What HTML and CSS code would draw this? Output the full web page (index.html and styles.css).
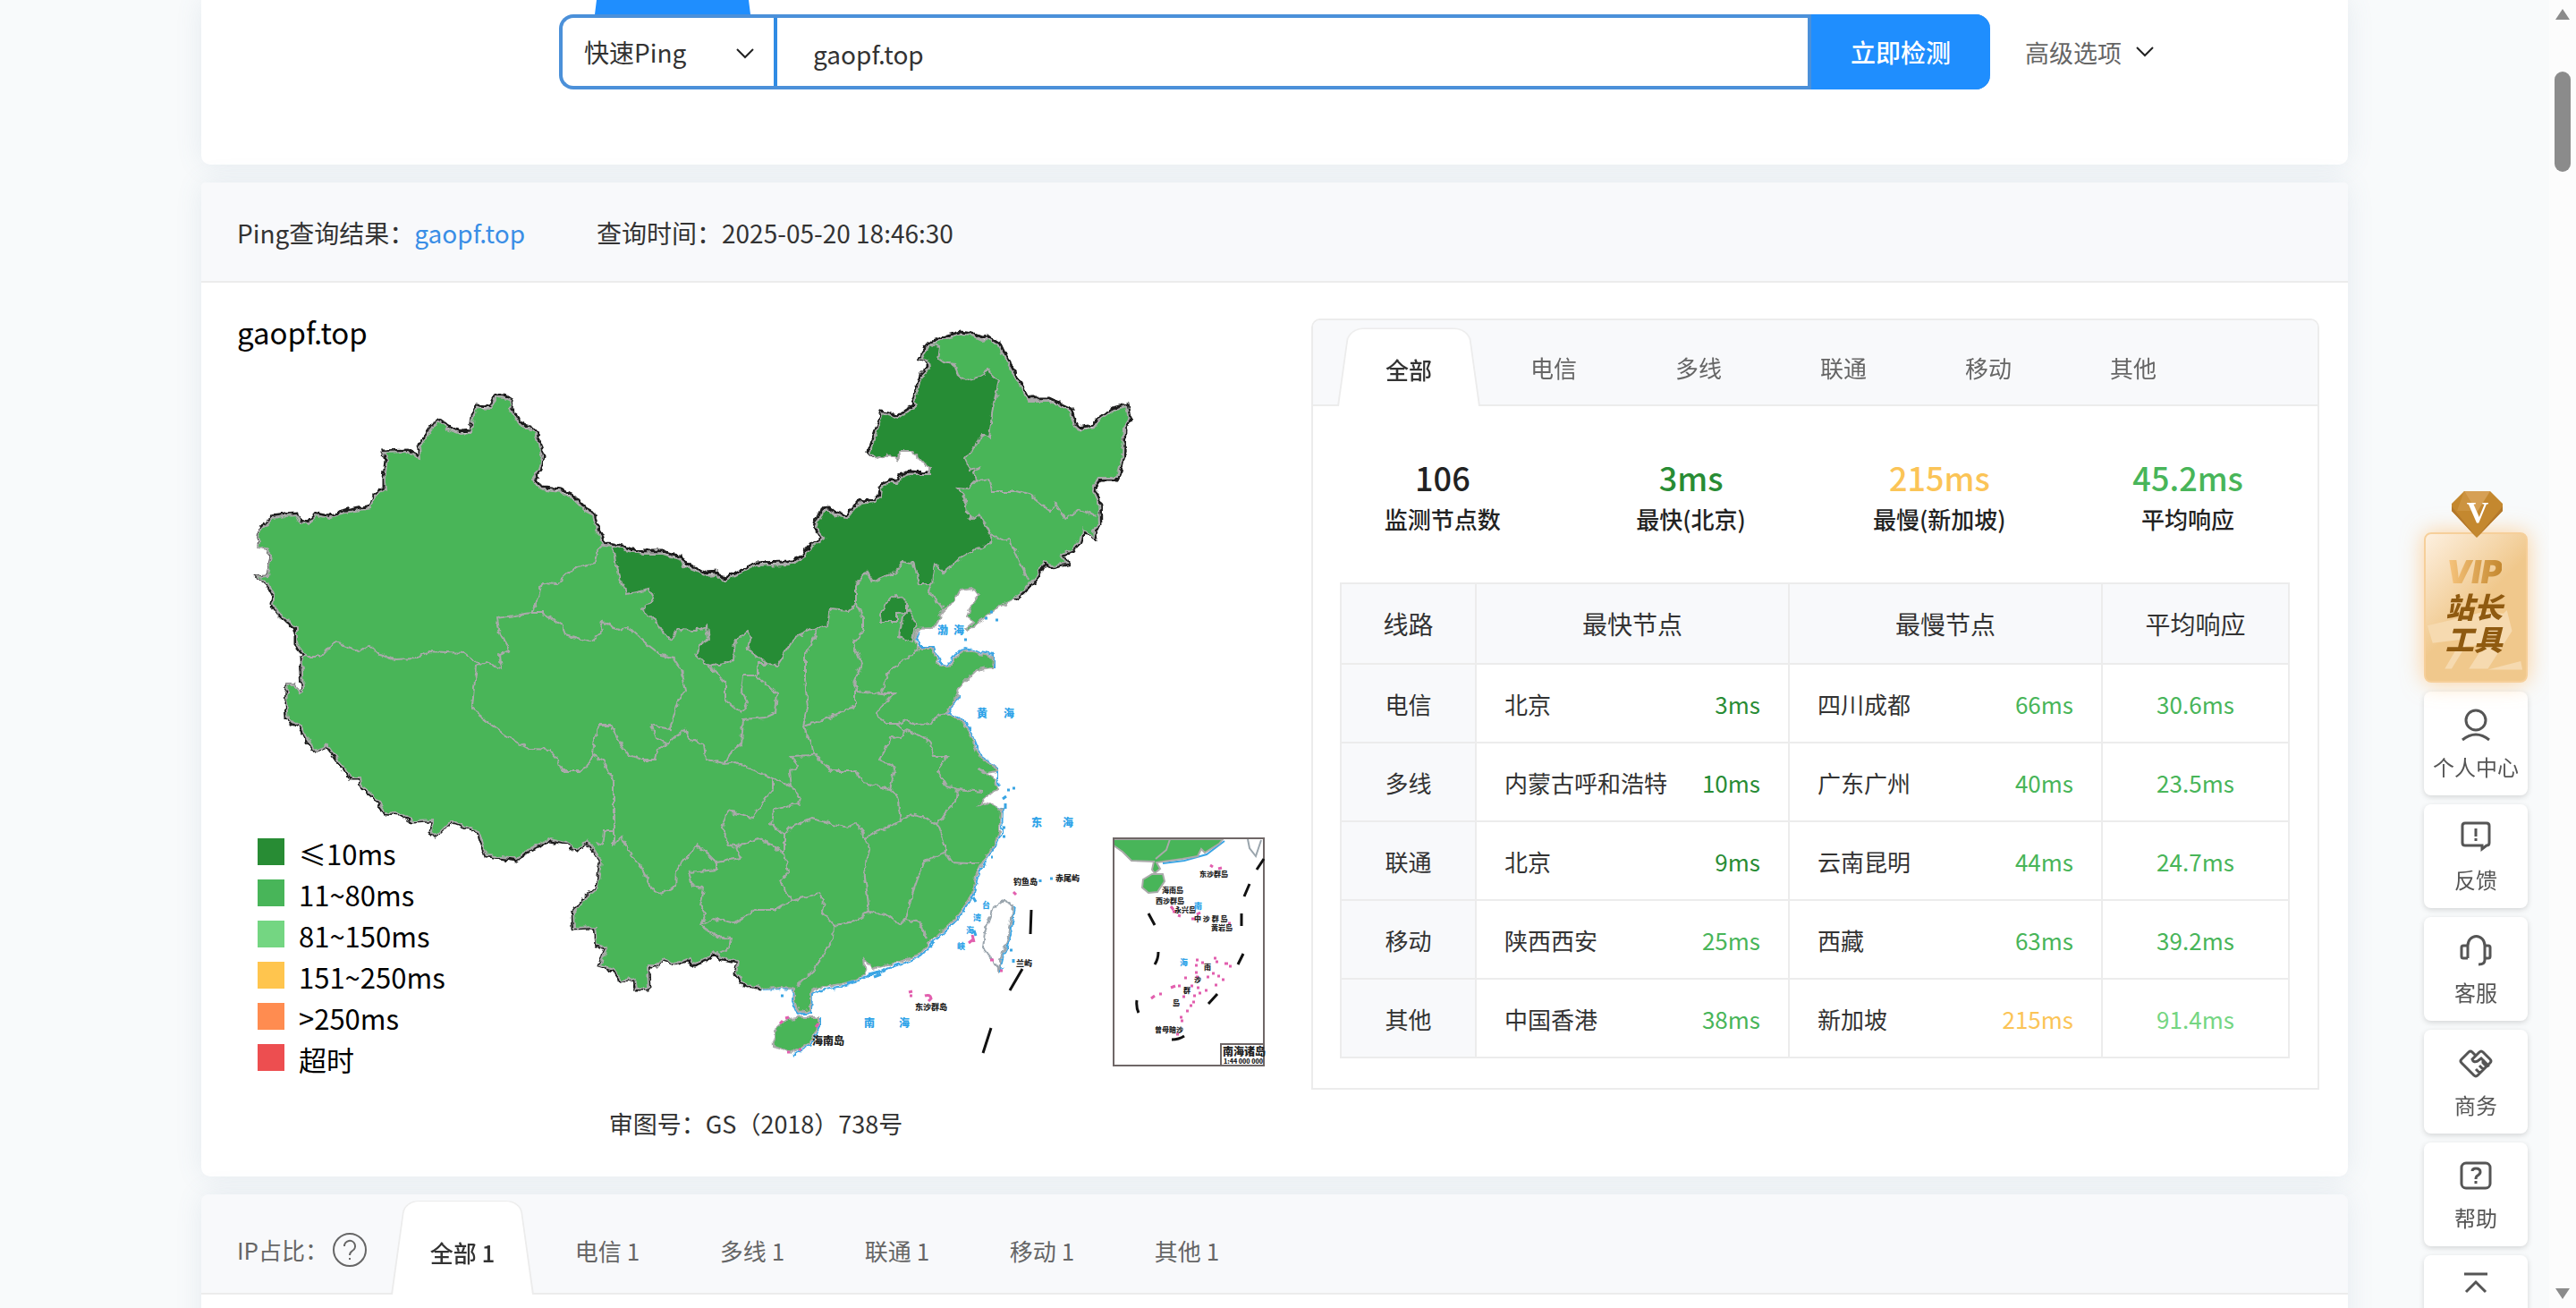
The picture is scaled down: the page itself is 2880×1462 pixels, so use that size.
FILE: index.html
```
<!DOCTYPE html>
<html lang="zh-CN">
<head>
    <meta charset="UTF-8">
    <meta name="viewport" content="width=device-width, initial-scale=1">
    <title>Ping检测</title>
    <link rel="stylesheet" href="styles.css">
</head>
<body>
    <div class="page">
        <section class="card search-card">
            <div class="search-tab"></div>
            <form class="search-row">
                <div class="search-box">
                    <div class="select-wrap">
                        <select class="mode" aria-label="检测方式">
                            <option>快速Ping</option>
                        </select>
                        <svg class="chevron" viewBox="0 0 20 12"><path d="M1 1l9 9 9-9"/></svg>
                    </div>
                    <input class="host" type="text" value="gaopf.top" aria-label="域名">
                    <button class="submit" type="button">立即检测</button>
                </div>
                <a class="advanced" href="#">高级选项
                    <svg class="chevron" viewBox="0 0 20 12"><path d="M1 1l9 9 9-9"/></svg>
                </a>
            </form>
        </section>

        <section class="card">
            <header class="card-head">
                <span>Ping查询结果：<a href="#">gaopf.top</a></span>
                <span>查询时间：2025-05-20 18:46:30</span>
            </header>
            <div class="result">
                <div class="map-col">
                    <svg class="map" viewBox="265 356 1160 880">
                        <defs>
                            <filter id="rough" x="-2%" y="-2%" width="104%" height="104%">
                                <feTurbulence type="fractalNoise" baseFrequency="0.13" numOctaves="2" seed="4"/>
                                <feDisplacementMap in="SourceGraphic" scale="7" xChannelSelector="R" yChannelSelector="G"/>
                            </filter>
                        </defs>
                        <text class="map-title" x="265" y="385">gaopf.top</text>

                        <g class="country" filter="url(#rough)">
                            <!-- country border, slightly above the land -->
                            <path class="border" d="M289 609L291 587 298 585 305 575 319 573 333 572 337 580 345 582 354 572 369 575 379 571 392 568 415 563 419 551 430 545 430 533 432 512 429 502 457 501 463 504 469 508 469 496 490 466 501 474 516 480 527 479 529 463 534 451 548 452 554 440 566 440 574 445 573 455 583 471 589 474 594 475 602 484 606 498 609 508 606 523 599 533 602 539 610 543 629 545 640 550 656 566 665 571 671 594 677 605 687 606 700 610 719 614 742 614 762 620 767 628 790 638 803 637 806 642 811 644 846 627 883 626 896 621 906 608 920 599 911 587 919 567 928 566 933 570 947 574 961 558 978 557 984 552 985 542 994 535 1004 534 1007 530 1017 525 1040 526M978 509L972 503 975 493 987 458 1004 463 1014 456 1023 451 1021 446 1030 417 1038 409 1038 402 1029 399 1039 381 1060 373 1075 369 1088 371 1098 375 1107 374 1119 382 1127 399 1138 419 1147 434 1152 443 1174 443 1198 454 1202 467 1206 476 1224 473 1229 466 1246 454 1261 450 1265 467 1259 477 1258 507 1252 534 1231 534 1224 543 1231 558 1232 585 1225 592 1226 601 1213 593 1210 603 1201 615 1189 618 1195 629 1176 633 1169 629 1163 640 1157 649 1136 669"/>
                            <path class="border" d="M289 609L298 612 304 618 300 642 287 643 300 652 306 663 304 673 312 684 331 701 331 718 342 732 337 733 339 768 334 773 331 763 322 763 320 783 321 802 336 811 352 838 366 832 381 853 393 868 403 868 404 878 418 889 431 907 447 908 462 917 484 916 482 928 488 934 505 917 535 928 544 955 578 960 593 949 616 938 633 941 647 950 657 938 663 947 672 960 668 990 653 1003 641 1018 642 1036 665 1035 667 1054 678 1058 670 1078 686 1083 695 1096 710 1093 712 1104 727 1104 726 1078 736 1078 742 1071 757 1076 769 1072 777 1077 790 1072 800 1064 807 1071 825 1074 823 1086 833 1100 852 1104"/>
                            <path class="sea" d="M853 1104L873 1103 888 1104 887 1118 893 1132 908 1130 909 1109 916 1106 956 1097 971 1089 1001 1078 1030 1067 1047 1049 1073 1024 1090 998 1094 978 1104 958 1114 943 1121 930 1122 903 1106 897M1118 878L1116 868 1116 856 1097 842 1089 822 1082 806 1061 794 1073 775M1112 744L1112 730 1096 727 1080 723 1071 727 1061 741 1051 738 1045 721 1031 721 1025 711 1028 703"/>
                            <path class="land" d="M289 611L291 589 298 587 305 577 319 575 333 574 337 582 345 584 354 574 369 577 379 573 392 570 415 566 419 553 432 546 431 533 434 512 430 504 457 503 463 506 471 511 470 498 490 468 501 477 516 483 528 482 530 463 535 454 549 455 555 442 566 443 573 446 571 455 581 472 587 476 592 476 600 484 604 498 607 508 604 523 597 533 600 541 610 546 629 548 639 553 654 568 664 573 669 595 676 607 687 608 700 613 719 617 742 617 761 623 765 631 790 641 803 640 805 645 811 647 846 630 883 629 897 623 908 609 922 599 913 587 921 569 928 569 933 573 948 577 962 561 979 559 986 553 987 543 995 537 1004 537 1007 532 1017 528 1040 528 1040 522 1029 510 1020 503 1008 503 1003 512 995 507 980 511 974 503 977 493 988 460 1004 466 1015 458 1025 453 1023 446 1032 418 1041 409 1040 402 1031 399 1040 383 1060 376 1075 372 1087 373 1098 378 1107 377 1117 383 1125 400 1136 420 1145 435 1150 446 1174 446 1196 456 1200 468 1206 479 1225 476 1230 468 1247 456 1260 452 1263 467 1257 477 1256 507 1250 532 1230 532 1222 543 1229 558 1230 585 1223 591 1224 599 1212 590 1208 603 1200 613 1187 617 1193 628 1176 631 1168 626 1162 638 1156 647 1135 667 1131 670 1118 676 1096 693 1082 703 1080 701 1090 693 1083 688 1086 677 1095 663 1089 655 1075 657 1069 668 1054 682 1049 693 1044 700 1026 701 1023 712 1029 723 1044 723 1049 740 1062 743 1073 728 1080 725 1096 729 1111 732 1110 744 1093 747 1082 757 1073 767 1071 775 1059 795 1080 807 1087 823 1095 843 1114 855 1116 860 1104 862 1094 858 1114 870 1116 880 1102 890 1095 898 1106 895 1120 903 1118 930 1112 943 1102 957 1092 977 1088 997 1071 1023 1045 1047 1029 1065 1000 1075 976 1082 967 1070 969 1087 955 1095 914 1103 907 1108 907 1128 894 1130 889 1117 889 1103 873 1102 853 1103 834 1098 824 1085 826 1073 807 1069 800 1062 790 1070 777 1075 769 1070 757 1075 742 1070 736 1077 725 1077 726 1103 713 1103 711 1092 696 1095 687 1082 671 1077 679 1058 668 1053 666 1034 643 1035 642 1018 654 1003 669 990 673 960 664 947 657 936 647 949 633 940 616 936 593 947 578 958 545 954 536 927 505 916 488 933 483 927 485 915 463 916 448 907 432 906 419 888 405 877 404 867 394 867 382 852 367 831 353 837 337 810 323 802 321 783 323 763 331 763 335 772 340 768 338 733 344 732 333 718 333 700 313 683 306 673 308 663 301 652 288 643 300 642 304 618 298 612Z"/>
                            <!-- Hainan -->
                            <path class="sea" d="M918 1136L918 1146 909 1164 888 1177"/>
                            <path class="land" d="M916 1135L916 1145 907 1163 886 1175 867 1168 866 1150 882 1137 900 1135Z"/>
                            <!-- Inner Mongolia, Beijing, Tianjin -->
                            <path class="land fast" d="M687 608L700 613 719 617 742 617 761 623 765 631 790 641 803 640 805 645 811 647 846 630 883 629 897 623 908 609 922 599 913 587 921 569 928 569 933 573 948 577 962 561 979 559 986 553 987 543 995 537 1004 537 1007 532 1017 528 1040 528 1040 522 1029 510 1020 503 1008 503 1003 512 995 507 980 511 974 503 977 493 988 460 1004 466 1015 458 1025 453 1023 446 1032 418 1041 409 1040 402 1031 399 1040 383 1051 385 1049 398 1056 403 1068 405 1072 418 1080 423 1101 418 1104 411 1118 423 1111 453 1107 487 1100 483 1080 510 1086 523 1096 520 1090 527 1093 535 1084 544 1072 543 1080 557 1082 573 1089 579 1096 573 1104 587 1110 596 1108 605 1091 613 1073 623 1056 638 1046 627 1043 650 1029 650 1022 627 1011 625 1004 637 977 648 970 637 958 652 958 673 950 681 929 679 926 697 908 702 890 710 877 730 870 741 859 740 837 725 841 710 837 703 823 715 821 735 810 740 793 743 779 730 782 720 793 713 791 698 779 703 758 702 752 712 741 705 734 692 718 680 732 667 727 657 702 662 693 642Z"/>
                            <path class="land fast" d="M1002 662L1015 672 1015 682 1004 683 1004 693 986 693 985 685 991 673Z"/>
                            <path class="land fast" d="M1017 680L1025 695 1020 715 1006 710 1010 687Z"/>
                            <!-- province lines -->
                            <path class="line" d="M676 607L668 615 666 627 643 633 623 651 607 650 601 673 595 683 557 689 560 707 570 725 560 730 562 745 545 738 534 743 531 767 529 787 536 797 566 820 593 835 616 836 625 847 629 860 648 860 660 852 664 840"/>
                            <path class="line" d="M344 732L360 732 376 715 402 726 413 719 425 730 442 735 467 734 480 726 520 728 539 742"/>
                            <path class="line" d="M595 683L607 683 629 697 633 707 660 715 671 707 675 693 692 702 704 699 723 717 740 730 754 733 763 747 768 770 759 783 750 812 729 808 735 823 746 830 735 837 733 847 719 847 704 842 691 823 683 808 671 808 666 823 664 842 675 848 687 872 687 927 677 927 675 943 666 940"/>
                            <path class="line" d="M687 927L687 943 696 933 706 953 719 970 729 990 738 997 756 990 757 970 775 950 779 943 790 950 802 962 802 970 771 973 775 987 788 992 784 1010 790 1020 784 1032 802 1045 819 1047 817 1058 805 1063"/>
                            <path class="line" d="M784 1032L800 1025 822 1030 845 1015 867 1015 886 1004 916 997 922 1005 920 1017 934 1032 933 1047 910 1083 892 1100"/>
                            <path class="line" d="M886 1004L873 982 882 973 878 953 865 943 849 935 824 945 829 957 802 962"/>
                            <path class="line" d="M878 953L878 930 884 923 908 913 949 923 959 918 968 935 973 947 967 970 973 1017 957 1028 934 1032M973 1017L992 1020 1008 1032 1014 1025 1029 1028 1037 1047M968 935L976 930 1008 916"/>
                            <path class="line" d="M1014 1025L1020 1000 1033 963 1057 950 1065 962 1082 963 1096 963M1057 950L1057 940 1049 920 1037 913 1020 908 1008 916 1004 887 996 880 1002 855 984 847 992 833 996 822 1010 823 1012 813 1002 807"/>
                            <path class="line" d="M1012 813L1037 823 1045 843 1061 843 1049 860 1059 877 1071 880 1069 895 1061 903 1049 920M1071 880L1100 883"/>
                            <path class="line" d="M996 880L967 873 959 860 931 860 912 842 884 843 894 855 884 860 886 877 896 890 894 897 865 903 863 920 878 930M811 852L824 850 886 877M865 867L865 880 853 897 841 912 814 905 808 923 814 940 824 945"/>
                            <path class="line" d="M746 830L757 820 767 813 773 825 788 830 790 847 811 852 819 837 830 830 832 802 857 800 868 795 870 773 846 753 832 753 830 770 837 783 830 795 812 780 812 762 796 743M848 753L848 740 859 740"/>
                            <path class="line" d="M915 702L901 730 901 757 904 790 899 810 910 833 912 842M899 810L928 800 957 787 957 768"/>
                            <path class="line" d="M958 673L966 690 966 703 955 717 964 740 955 763 959 770 988 773 986 770 995 747 1020 730 1029 723M988 773L1000 773 979 797 993 807 1006 807 1015 802 1024 808 1042 807 1049 797 1059 795"/>
                            <path class="line" d="M1043 650L1040 660 1055 678M1110 596L1125 603 1129 600 1140 623 1150 647M1093 535L1107 533 1111 547 1136 547 1154 552 1176 570 1180 560 1193 579 1207 567 1227 575"/>
                            <!-- Taiwan -->
                            <path class="sea" d="M1136 1010L1131 1043 1122 1070 1119 1083"/>
                            <path class="island" d="M1124 1005L1134 1010 1129 1043 1120 1070 1118 1082 1112 1073 1100 1058 1102 1040 1112 1013Z"/>
                        </g>

                        <g class="dots-blue">
                            <path d="M1101 691h3M1107 684h3M1113 693h3M1078 715h3M1126 883h3M1132 881h3M1121 893l4 -3M1124 898v6M1121 925h3M1121 935h3M1109 950h2M1108 958h2M1088 1003l3 5M1089 1040l2 6M1129 1062h3M1133 1076v-4M1163 986v-3M1174 982h3M971 1089l12 -3M977 1092l8 -3M947 1099l8 -2M873 1113h3"/>
                        </g>
                        <g class="dots-pink">
                            <path d="M1133 997l3 3M1083 1054l5 -4M1087 1045l2 8M1107 1073h4M1118 1085h3M1016 1109l4 -1M1017 1113h3M1034 1113q6 -2 7 3l-3 3M872 1144l3 -3M878 1138l4 -1M880 1176h3M893 1173h3M912 1148l3 -4"/>
                        </g>
                        <path class="dash" d="M1153 1017L1152 1044M1143 1083L1129 1107M1108 1149L1099 1177"/>

                        <g class="label blue">
                            <text x="1048" y="709">渤</text><text x="1066" y="709">海</text>
                            <text x="1092" y="802">黄</text><text x="1122" y="802">海</text>
                            <text x="1153" y="924">东</text><text x="1188" y="924">海</text>
                            <text x="966" y="1148">南</text><text x="1005" y="1148">海</text>
                            <text class="small" x="1098" y="1015">台</text><text class="small" x="1088" y="1029">湾</text>
                            <text class="small" x="1080" y="1043">海</text><text class="small" x="1070" y="1061">峡</text>
                        </g>
                        <g class="label">
                            <text class="small" x="1133" y="989">钓鱼岛</text>
                            <text class="small" x="1180" y="985">赤尾屿</text>
                            <text class="small" x="1136" y="1080">兰屿</text>
                            <text class="small" x="1023" y="1129">东沙群岛</text>
                            <text x="908" y="1168">海南岛</text>
                        </g>

                        <!-- South China Sea inset -->
                        <path class="sea" d="M1369 940L1349 955 1324 962 1300 965"/>
                        <path class="land" d="M1245 938H1367L1363 943 1347 953 1343 949 1339 957 1322 960 1300 963 1293 964 1297 971 1291 976 1288 972 1290 963 1265 962 1255 952 1245 945Z"/>
                        <path class="line" d="M1308 938L1304 950 1292 960"/>
                        <path class="land" d="M1300 977L1302 985 1294 997 1284 998 1277 992 1278 983 1288 977Z"/>
                        <path class="island" d="M1395 938L1397 948 1404 957 1410 939"/>
                        <rect class="inset" x="1245" y="937" width="168" height="254"/>
                        <rect class="inset" x="1365" y="1167" width="48" height="24"/>
                        <path class="dash" d="M1413 960L1405 972M1397 988L1391 1002M1388 1021V1035M1390 1066L1384 1078M1361 1111L1351 1122M1324 1158Q1318 1162 1310 1162M1271 1118Q1270 1126 1273 1132M1295 1064Q1295 1072 1291 1078M1284 1021L1291 1034"/>
                        <g class="dots-pink">
                            <path d="M1353 967l3 2M1362 971l4 -1M1309 1013l3 4M1311 1019h4M1317 1023l3 1M1332 1027h4M1338 1022l4 -2M1373 1032h3M1337 1073h3M1336 1079h3M1343 1076h3M1357 1071h3M1359 1075h3M1369 1077h4M1374 1080h3M1336 1087h3M1337 1092h3M1349 1092h3M1355 1088h3M1361 1091h3M1366 1095h3M1324 1093h3M1309 1104l5 -2M1317 1102h3M1331 1102h3M1338 1104h3M1347 1107h3M1340 1110h3M1334 1113h3M1296 1111h3M1287 1116l4 -3M1322 1114h3M1333 1120h3M1330 1124h3M1326 1130h3M1319 1137h3M1320 1141h3M1315 1156h3M1358 1101h3"/>
                        </g>
                        <g class="label tiny">
                            <text x="1341" y="980">东沙群岛</text>
                            <text x="1299" y="998">海南岛</text>
                            <text x="1292" y="1010">西沙群岛</text>
                            <text x="1313" y="1020">永兴岛</text>
                            <text x="1335" y="1030">中 沙 群 岛</text>
                            <text x="1354" y="1040">黄岩岛</text>
                            <text x="1346" y="1084">南</text><text x="1335" y="1098">沙</text>
                            <text x="1323" y="1110">群</text><text x="1311" y="1124">岛</text>
                            <text x="1291" y="1154">曾母暗沙</text>
                            <text class="scale" x="1368" y="1189">1:44 000 000</text>
                        </g>
                        <g class="label"><text x="1367" y="1180">南海诸岛</text></g>
                        <g class="label blue"><text class="small" x="1335" y="1016">南</text><text class="small" x="1319" y="1079">海</text></g>

                        <g class="legend">
                            <rect x="288" y="937" width="30" height="30" fill="#288c34"/><text x="334" y="967">≤10ms</text>
                            <rect x="288" y="983" width="30" height="30" fill="#48b559"/><text x="334" y="1013">11~80ms</text>
                            <rect x="288" y="1029" width="30" height="30" fill="#74d682"/><text x="334" y="1059">81~150ms</text>
                            <rect x="288" y="1075" width="30" height="30" fill="#ffc54e"/><text x="334" y="1105">151~250ms</text>
                            <rect x="288" y="1121" width="30" height="30" fill="#ff8c50"/><text x="334" y="1151">&gt;250ms</text>
                            <rect x="288" y="1167" width="30" height="30" fill="#ed4e50"/><text x="334" y="1197">超时</text>
                        </g>
                    </svg>
                    <p class="map-note">审图号：GS（2018）738号</p>
                </div>

                <div class="panel">
                    <div class="tabs">
                        <button class="tab active" type="button">全部</button>
                        <button class="tab" type="button">电信</button>
                        <button class="tab" type="button">多线</button>
                        <button class="tab" type="button">联通</button>
                        <button class="tab" type="button">移动</button>
                        <button class="tab" type="button">其他</button>
                    </div>
                    <div class="stats">
                        <div class="stat"><strong>106</strong><span>监测节点数</span></div>
                        <div class="stat"><strong class="t-fast">3ms</strong><span>最快(北京)</span></div>
                        <div class="stat"><strong class="t-slow">215ms</strong><span>最慢(新加坡)</span></div>
                        <div class="stat"><strong class="t-good">45.2ms</strong><span>平均响应</span></div>
                    </div>
                    <table class="lines">
                        <colgroup>
                            <col class="c-line"><col class="c-node"><col class="c-node"><col class="c-avg">
                        </colgroup>
                        <thead>
                            <tr><th>线路</th><th>最快节点</th><th>最慢节点</th><th>平均响应</th></tr>
                        </thead>
                        <tbody>
                            <tr>
                                <th>电信</th>
                                <td><div class="node">北京<span class="t-fast">3ms</span></div></td>
                                <td><div class="node">四川成都<span class="t-good">66ms</span></div></td>
                                <td class="t-good">30.6ms</td>
                            </tr>
                            <tr>
                                <th>多线</th>
                                <td><div class="node">内蒙古呼和浩特<span class="t-fast">10ms</span></div></td>
                                <td><div class="node">广东广州<span class="t-good">40ms</span></div></td>
                                <td class="t-good">23.5ms</td>
                            </tr>
                            <tr>
                                <th>联通</th>
                                <td><div class="node">北京<span class="t-fast">9ms</span></div></td>
                                <td><div class="node">云南昆明<span class="t-good">44ms</span></div></td>
                                <td class="t-good">24.7ms</td>
                            </tr>
                            <tr>
                                <th>移动</th>
                                <td><div class="node">陕西西安<span class="t-good">25ms</span></div></td>
                                <td><div class="node">西藏<span class="t-good">63ms</span></div></td>
                                <td class="t-good">39.2ms</td>
                            </tr>
                            <tr>
                                <th>其他</th>
                                <td><div class="node">中国香港<span class="t-good">38ms</span></div></td>
                                <td><div class="node">新加坡<span class="t-slow">215ms</span></div></td>
                                <td class="t-mid">91.4ms</td>
                            </tr>
                        </tbody>
                    </table>
                </div>
            </div>
        </section>

        <section class="card">
            <div class="tabs ip-tabs">
                <span class="ip-label">IP占比：</span>
                <svg class="ip-help" viewBox="0 0 38 38"><circle cx="19" cy="19" r="18"/><path d="M13 15a6 6 0 1 1 9 5q-3 2-3 5"/><path d="M19 28v2"/></svg>
                <button class="tab active" type="button">全部 1</button>
                <button class="tab" type="button">电信 1</button>
                <button class="tab" type="button">多线 1</button>
                <button class="tab" type="button">联通 1</button>
                <button class="tab" type="button">移动 1</button>
                <button class="tab" type="button">其他 1</button>
            </div>
            <div class="ip-body"></div>
        </section>
    </div>

    <nav class="side">
        <a class="vip" href="#">
            <svg class="vip-bg" viewBox="0 0 116 168"><path d="M2 106l34 -8 30 -8 24 2 4 -4 6 24 -28 44H50l18 -28 -22 2 -16 26H22l20 -34 -34 4zM72 157l38 -10 2 10z"/></svg>
            <svg class="gem" viewBox="0 0 57 52">
                <path fill="#c4882f" d="M14 0h29l14 14v8L28 52 0 22v-8z"/>
                <path fill="#d6a055" d="M14 0h29L28 24z"/>
                <path fill="#cc9340" d="M14 0L6 22h22z"/>
                <path fill="#b4782a" d="M57 17L28 52 0 17v5l28 30 29-30z"/>
                <text x="29" y="35" text-anchor="middle">V</text>
            </svg>
            <span class="vip-word">VIP</span>
            <span class="vip-name">站长<br>工具</span>
        </a>
        <a class="side-item" href="#">
            <svg viewBox="0 0 40 44"><circle cx="20" cy="20" r="11"/><path d="M5 42q15-12 30 0"/></svg>
            个人中心
        </a>
        <a class="side-item" href="#">
            <svg viewBox="0 0 40 44"><path d="M8 9h24q3 0 3 3v19q0 3-3 3l-5 4v-4H8q-3 0-3-3V12q0-3 3-3z"/><path d="M20 15v9M20 26v3"/></svg>
            反馈
        </a>
        <a class="side-item" href="#">
            <svg viewBox="0 0 40 44"><path d="M11 34V20a9 10 0 0 1 19 0v16q0 5-7 5"/><path d="M11 34H6q-2 0-2-2V22q0-2 2-2h5M30 20h4q2 0 2 2v10q0 2-2 2h-4"/></svg>
            客服
        </a>
        <a class="side-item" href="#">
            <svg viewBox="0 0 40 44"><path d="M20 17l-4-4q-2-2-4 0L4 21q-2 2 0 4l14 14q2 2 4 0l14-14q2-2 0-4l-8-8q-2-2-4 0l-8 8q1 4 6 2l4-3 9 9M20 32l4 4M24 28l4 4M28 21v4l4 4"/></svg>
            商务
        </a>
        <a class="side-item" href="#">
            <svg viewBox="0 0 40 44"><rect x="4" y="11" width="32" height="28" rx="5"/><path d="M16 20q0-3 4-3 5 0 5 4 0 2-3 4-2 1-2 4M20 31v3"/></svg>
            帮助
        </a>
        <a class="side-item" href="#" aria-label="返回顶部">
            <svg viewBox="0 0 40 44"><path d="M7 9h26M9 29l11-11 11 11"/></svg>
        </a>
    </nav>

    <div class="scrollbar">
        <svg viewBox="0 0 18 14"><path d="M9 1l8 12H1z"/></svg>
        <div class="thumb"></div>
        <svg class="down" viewBox="0 0 18 14"><path d="M9 13L1 1h16z"/></svg>
    </div>
</body>
</html>
```
FILE: styles.css
```
* {
    box-sizing: border-box;
}

body {
    margin: 0;
    height: 100vh;
    overflow: hidden;
    background: #f8fafb;
    color: #333;
    font-family: "Noto Sans CJK SC", "Noto Sans", sans-serif;
    font-size: 28px;
}

a {
    color: #3a8ee6;
    text-decoration: none;
}

button, input, select {
    font: inherit;
    color: inherit;
    border: 0;
    background: none;
    padding: 0;
    margin: 0;
}

.page {
    width: calc(100% - 30px);
    padding: 0 225px;
}

.card {
    background: #fff;
    border-radius: 10px;
    box-shadow: 0 0 30px rgba(90, 120, 160, 0.12);
    margin-bottom: 20px;
}

.search-card {
    border-radius: 0 0 10px 10px;
    padding: 0 40px 84px 400px;
}

.search-tab {
    width: 174px;
    height: 16px;
    margin-left: 40px;
    background: #1f8efe;
    clip-path: polygon(2px 0, 172px 0, 100% 100%, 0 100%);
}

.search-row {
    display: flex;
    align-items: center;
    gap: 39px;
}

.search-box {
    display: flex;
    width: 1600px;
    height: 84px;
    border: 4px solid #4b90d9;
    border-right: 0;
    border-radius: 16px;
}

.select-wrap {
    position: relative;
    width: 240px;
    border-right: 4px solid #2f8be4;
}

.mode {
    width: 100%;
    height: 100%;
    padding-left: 24px;
    appearance: none;
}

.chevron {
    width: 20px;
    height: 12px;
    fill: none;
    stroke: #222;
    stroke-width: 2;
}

.select-wrap .chevron {
    position: absolute;
    right: 22px;
    top: 34px;
}

.host {
    flex: 1;
    min-width: 0;
    padding: 4px 0 0 40px;
}

.submit {
    width: 204px;
    margin: -4px 0;
    border-left: 4px solid #4b90d9;
    border-radius: 0 16px 16px 0;
    background: #1f8efe;
    color: #fff;
    font-weight: 500;
}

.advanced {
    display: flex;
    align-items: center;
    gap: 16px;
    font-size: 27px;
    color: #666;
}

.card-head {
    display: flex;
    align-items: center;
    gap: 80px;
    height: 112px;
    padding: 2px 40px 0;
    background: #f8f9fb;
    border-bottom: 2px solid #ececec;
    border-radius: 4px 4px 0 0;
}

.result {
    display: grid;
    grid-template-columns: 1160fr 1127fr;
    gap: 41px;
    align-items: start;
    padding: 40px 32px 39px 40px;
}

.map {
    display: block;
    width: 100%;
    overflow: visible;
}

.map-title {
    font-size: 33px;
    fill: #000;
}

.country {
    transform: translate(-1px, 2px);
}

.legend {
    font-size: 31px;
    fill: #000;
}

.land {
    fill: #48b559;
    stroke: #aaa;
    stroke-width: 2;
}

.fast {
    fill: #288c34;
}

.line {
    fill: none;
    stroke: #aaa;
    stroke-width: 2;
}

.border {
    fill: none;
    stroke: #1a1a1a;
    stroke-width: 3;
}

.sea {
    fill: none;
    stroke: #3aa5e4;
    stroke-width: 2;
}

.island {
    fill: #fff;
    stroke: #9aa5ad;
    stroke-width: 2;
}

.inset {
    fill: none;
    stroke: #6f6767;
    stroke-width: 2;
}

.dash {
    fill: none;
    stroke: #111;
    stroke-width: 3;
}

.dots-blue {
    fill: none;
    stroke: #3aa5e4;
    stroke-width: 3;
}

.dots-pink {
    fill: none;
    stroke: #e25fae;
    stroke-width: 3;
}

.label {
    font-size: 12px;
    font-weight: 900;
    fill: #222;
}

.label .small {
    font-size: 9px;
}

.label.tiny {
    font-size: 8px;
}

.tiny .scale {
    font-size: 7px;
}

.label.blue {
    fill: #2fa3e8;
}

.map-note {
    margin: 0;
    font-size: 27px;
    line-height: 40px;
    text-align: center;
}

.panel {
    border: 2px solid #ececec;
    border-radius: 10px 10px 0 0;
    padding-bottom: 33px;
}

.tabs {
    display: flex;
    height: 96px;
    padding-left: 26px;
    background: #f8f9fb;
    border-bottom: 2px solid #ececec;
    border-radius: 8px 8px 0 0;
}

.tab {
    position: relative;
    z-index: 0;
    width: 162px;
    padding-top: 10px;
    font-size: 26px;
    color: #666;
}

.tab.active {
    padding-top: 14px;
    font-weight: 500;
    color: #333;
}

/* tilted box gives the tab its slanted sides */
.tab.active::before {
    content: "";
    position: absolute;
    z-index: -1;
    left: 1px;
    right: 1px;
    bottom: -2px;
    height: 103px;
    background: #fff;
    border: 2px solid #ececec;
    border-bottom: 0;
    border-radius: 20px 20px 0 0;
    transform: perspective(100px) rotateX(10deg);
    transform-origin: bottom;
}

.stats {
    display: grid;
    grid-template-columns: repeat(4, 1fr);
    padding: 53px 6px 51px;
    text-align: center;
    font-weight: 500;
    color: #222;
}

.stat strong {
    display: block;
    font-size: 36px;
    line-height: 52px;
    font-weight: 500;
}

.stat span {
    font-size: 26px;
    line-height: 40px;
}

.lines {
    width: calc(100% - 61px);
    margin-left: 30px;
    border-collapse: collapse;
    table-layout: fixed;
    text-align: center;
    font-size: 26px;
}

.c-line {
    width: 151px;
}

.c-avg {
    width: 209px;
}

.lines th, .lines td {
    height: 88px;
    padding: 0 31px;
    border: 2px solid #ececec;
    font-weight: 400;
}

.lines th {
    background: #f8f9fb;
}

.lines thead th {
    height: 90px;
    font-size: 28px;
}

.node {
    display: flex;
    justify-content: space-between;
    white-space: nowrap;
}

.t-fast {
    color: #288c34;
}

.t-good {
    color: #48b559;
}

.t-mid {
    color: #74d682;
}

.t-slow {
    color: #fbc457;
}

.ip-tabs {
    align-items: center;
    height: 112px;
    padding-left: 40px;
}

.ip-tabs .tab {
    align-self: stretch;
    padding-top: 14px;
}

.ip-tabs .tab.active {
    padding-top: 18px;
}

.ip-tabs .active::before {
    height: 129px;
}

.ip-label {
    width: 107px;
    padding-top: 12px;
    font-size: 26px;
    color: #666;
}

.ip-help {
    width: 38px;
    margin: 14px 26px 0 0;
    fill: none;
    stroke: #666;
    stroke-width: 2;
}

.ip-body {
    height: 60px;
}

.side {
    position: fixed;
    top: 595px;
    right: 54px;
    width: 116px;
    display: flex;
    flex-direction: column;
    gap: 10px;
}

.side-item {
    display: flex;
    flex-direction: column;
    align-items: center;
    flex: none;
    gap: 10px;
    height: 116px;
    padding-top: 12px;
    background: #fff;
    border-radius: 8px;
    box-shadow: 0 2px 6px rgba(0, 0, 0, 0.15);
    color: #555;
    font-size: 24px;
    line-height: 36px;
}

.side-item svg {
    width: 40px;
    height: 44px;
    fill: none;
    stroke: #555;
    stroke-width: 3;
}

.vip {
    position: relative;
    display: flex;
    flex-direction: column;
    align-items: center;
    height: 168px;
    padding: 22px 4px 0 0;
    border: 2px solid #f6cf9a;
    border-radius: 8px;
    background: linear-gradient(135deg, #fdf0e0, #f0c88c 50%, #f0c88c);
    box-shadow: 0 0 24px rgba(255, 180, 90, 0.6);
    font-style: italic;
    font-weight: 900;
    color: #8f5a10;
}

.vip-bg {
    position: absolute;
    inset: 0;
    fill: #f6dab0;
}

.gem {
    position: absolute;
    top: -48px;
    left: 29px;
    width: 57px;
}

.gem text {
    fill: #fff;
    font: bold 34px "Liberation Serif", serif;
}

.vip-word {
    position: relative;
    font-family: Inter, sans-serif;
    font-size: 36px;
    line-height: 40px;
    background: linear-gradient(90deg, #f8c680, #c4882f);
    background-clip: text;
    color: transparent;
}

.vip-name {
    position: relative;
    font-size: 32px;
    line-height: 36px;
}

.scrollbar {
    position: fixed;
    top: 0;
    right: 0;
    bottom: 0;
    width: 30px;
    display: flex;
    flex-direction: column;
    align-items: center;
    padding: 9px 0;
    background: #fcfcfc;
}

.scrollbar svg {
    width: 18px;
    height: 14px;
    fill: #8b8b8b;
}

.scrollbar .down {
    margin-top: auto;
}

.thumb {
    width: 18px;
    height: 112px;
    margin-top: 57px;
    border-radius: 9px;
    background: #8b8b8b;
}
```
